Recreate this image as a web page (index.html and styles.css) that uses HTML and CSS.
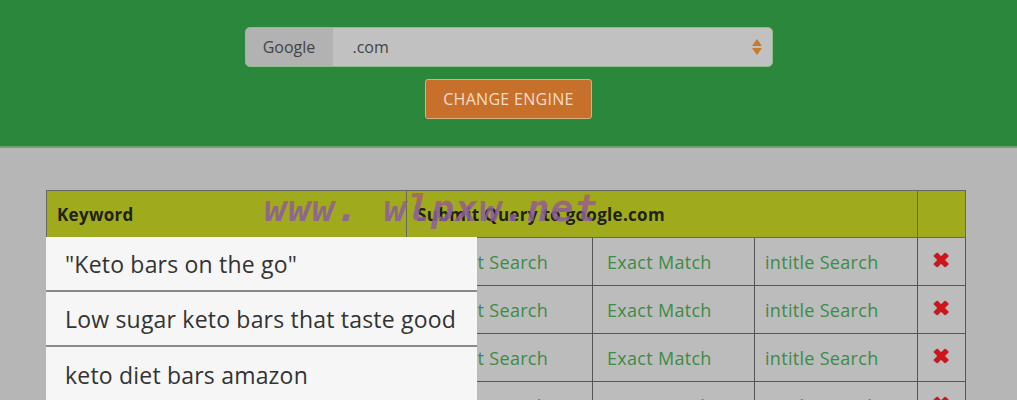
FILE: index.html
```html
<!DOCTYPE html>
<html lang="en">
<head>
  <meta charset="UTF-8" />
  <meta name="viewport" content="width=device-width, initial-scale=1.0"/>
  <title>Keyword Search Tool</title>
  <link rel="stylesheet" href="styles.css">
</head>
<body>

  <header class="top">
    <div class="engine">
      <span class="engine-label">Google</span>
      <div class="engine-select">
        <span>.com</span>
        <span class="arrows"><i class="up"></i><i class="down"></i></span>
      </div>
    </div>
    <button class="change-btn">CHANGE ENGINE</button>
  </header>

  <main class="results">
    <div class="table-wrap">
      <table class="kw-table">
        <colgroup>
          <col class="w-kw">
          <col class="w-2">
          <col class="w-3">
          <col class="w-4">
          <col class="w-del">
        </colgroup>
        <thead>
          <tr>
            <th>Keyword</th>
            <th colspan="3">Submit Query to google.com</th>
            <th></th>
          </tr>
        </thead>
        <tbody>
          <tr>
            <td>"Keto bars on the go"</td>
            <td><a href="#">Default Search</a></td>
            <td><a href="#">Exact Match</a></td>
            <td class="c4"><a href="#">intitle Search</a></td>
            <td class="del">&#10006;</td>
          </tr>
          <tr>
            <td>Low sugar keto bars that taste good</td>
            <td><a href="#">Default Search</a></td>
            <td><a href="#">Exact Match</a></td>
            <td class="c4"><a href="#">intitle Search</a></td>
            <td class="del">&#10006;</td>
          </tr>
          <tr>
            <td>keto diet bars amazon</td>
            <td><a href="#">Default Search</a></td>
            <td><a href="#">Exact Match</a></td>
            <td class="c4"><a href="#">intitle Search</a></td>
            <td class="del">&#10006;</td>
          </tr>
          <tr>
            <td>keto bars review</td>
            <td><a href="#">Default Search</a></td>
            <td><a href="#">Exact Match</a></td>
            <td class="c4"><a href="#">intitle Search</a></td>
            <td class="del">&#10006;</td>
          </tr>
        </tbody>
      </table>

      <ul class="suggest">
        <li>"Keto bars on the go"</li>
        <li>Low sugar keto bars that taste good</li>
        <li>keto diet bars amazon</li>
      </ul>

      <div class="watermark">www. wlpxw.net</div>
    </div>
  </main>

</body>
</html>
```

FILE: styles.css
```css
* { box-sizing: border-box; }
body {
  margin: 0;
  font-family: 'Open Sans', sans-serif;
  background: #b6b6b6;
  color: #333;
  overflow: hidden;
}

.top {
  background: #2a873b;
  height: 148px;
  border-bottom: 2px solid #6aa56e;
  padding-top: 27px;
  display: flex;
  flex-direction: column;
  align-items: center;
}

.engine {
  display: flex;
  width: 528px;
  height: 40px;
  border-radius: 5px;
  overflow: hidden;
  border: 1px solid #8cc08c;
  background: #c1c1c1;
}

.engine-label {
  width: 87px;
  background: #b2b2b2;
  display: flex;
  align-items: center;
  justify-content: center;
  font-size: 16px;
  color: #444;
}

.engine-select {
  flex: 1;
  display: flex;
  align-items: center;
  justify-content: space-between;
  padding: 0 10px 0 20px;
  font-size: 16px;
  color: #444;
}

.arrows {
  display: flex;
  flex-direction: column;
  gap: 2px;
}

.arrows i {
  width: 0;
  height: 0;
  border-left: 5px solid transparent;
  border-right: 5px solid transparent;
}

.arrows .up { border-bottom: 7px solid #c97a2a; }
.arrows .down { border-top: 7px solid #c97a2a; }

.change-btn {
  margin-top: 12px;
  width: 167px;
  height: 40px;
  background: #c7702c;
  border: 1px solid #d9b07a;
  border-radius: 3px;
  color: #f6dcc4;
  font-family: 'Open Sans', sans-serif;
  font-size: 16px;
  letter-spacing: 0.3px;
}

.results {
  padding: 42px 52px 0 46px;
}

.table-wrap {
  position: relative;
}

.kw-table {
  width: 919px;
  border-collapse: collapse;
  table-layout: fixed;
}

.w-kw { width: 360px; }
.w-2 { width: 186px; }
.w-3 { width: 162px; }
.w-4 { width: 163px; }
.w-del { width: 48px; }

.kw-table th {
  background: #9fab1d;
  text-align: left;
  font-size: 17px;
  font-weight: 700;
  letter-spacing: 0.3px;
  color: #222211;
  height: 47px;
  padding: 0 10px;
  border: 1px solid #666;
}

.kw-table td {
  background: #bcbcbc;
  border: 1px solid #555;
  height: 48px;
  padding: 0 14px;
  font-size: 18px;
  letter-spacing: 0.3px;
  white-space: nowrap;
  overflow: hidden;
}

.kw-table td.c4 { padding-left: 10px; }

.kw-table td a {
  color: #3d8b46;
  text-decoration: none;
}

.kw-table td.del {
  color: #d0141b;
  text-align: center;
  padding: 0;
  font-size: 22px;
  vertical-align: top;
  padding-top: 6px;
  text-shadow: 0 0 1px #7a0a0a;
}

.suggest {
  position: absolute;
  left: 0;
  top: 47px;
  width: 431px;
  margin: 0;
  padding: 0;
  list-style: none;
  background: #fafafa;
}

.suggest li {
  height: 55px;
  padding: 0 19px;
  display: flex;
  align-items: center;
  font-size: 23px;
  letter-spacing: 0.2px;
  color: #333;
  border-bottom: 2px solid #8a8a8a;
  background: #f6f6f6;
}

.suggest li:last-child { border-bottom: none; }

.watermark {
  position: absolute;
  left: 218px;
  top: -4px;
  font-family: 'DejaVu Sans Mono', monospace;
  font-weight: bold;
  font-style: italic;
  font-size: 38px;
  letter-spacing: 1px;
  background: linear-gradient(180deg, #c0683a 0%, #8a5aa6 55%, #9060a0 100%);
  background-clip: text;
  -webkit-background-clip: text;
  -webkit-text-fill-color: transparent;
  opacity: 0.85;
  pointer-events: none;
}
```
